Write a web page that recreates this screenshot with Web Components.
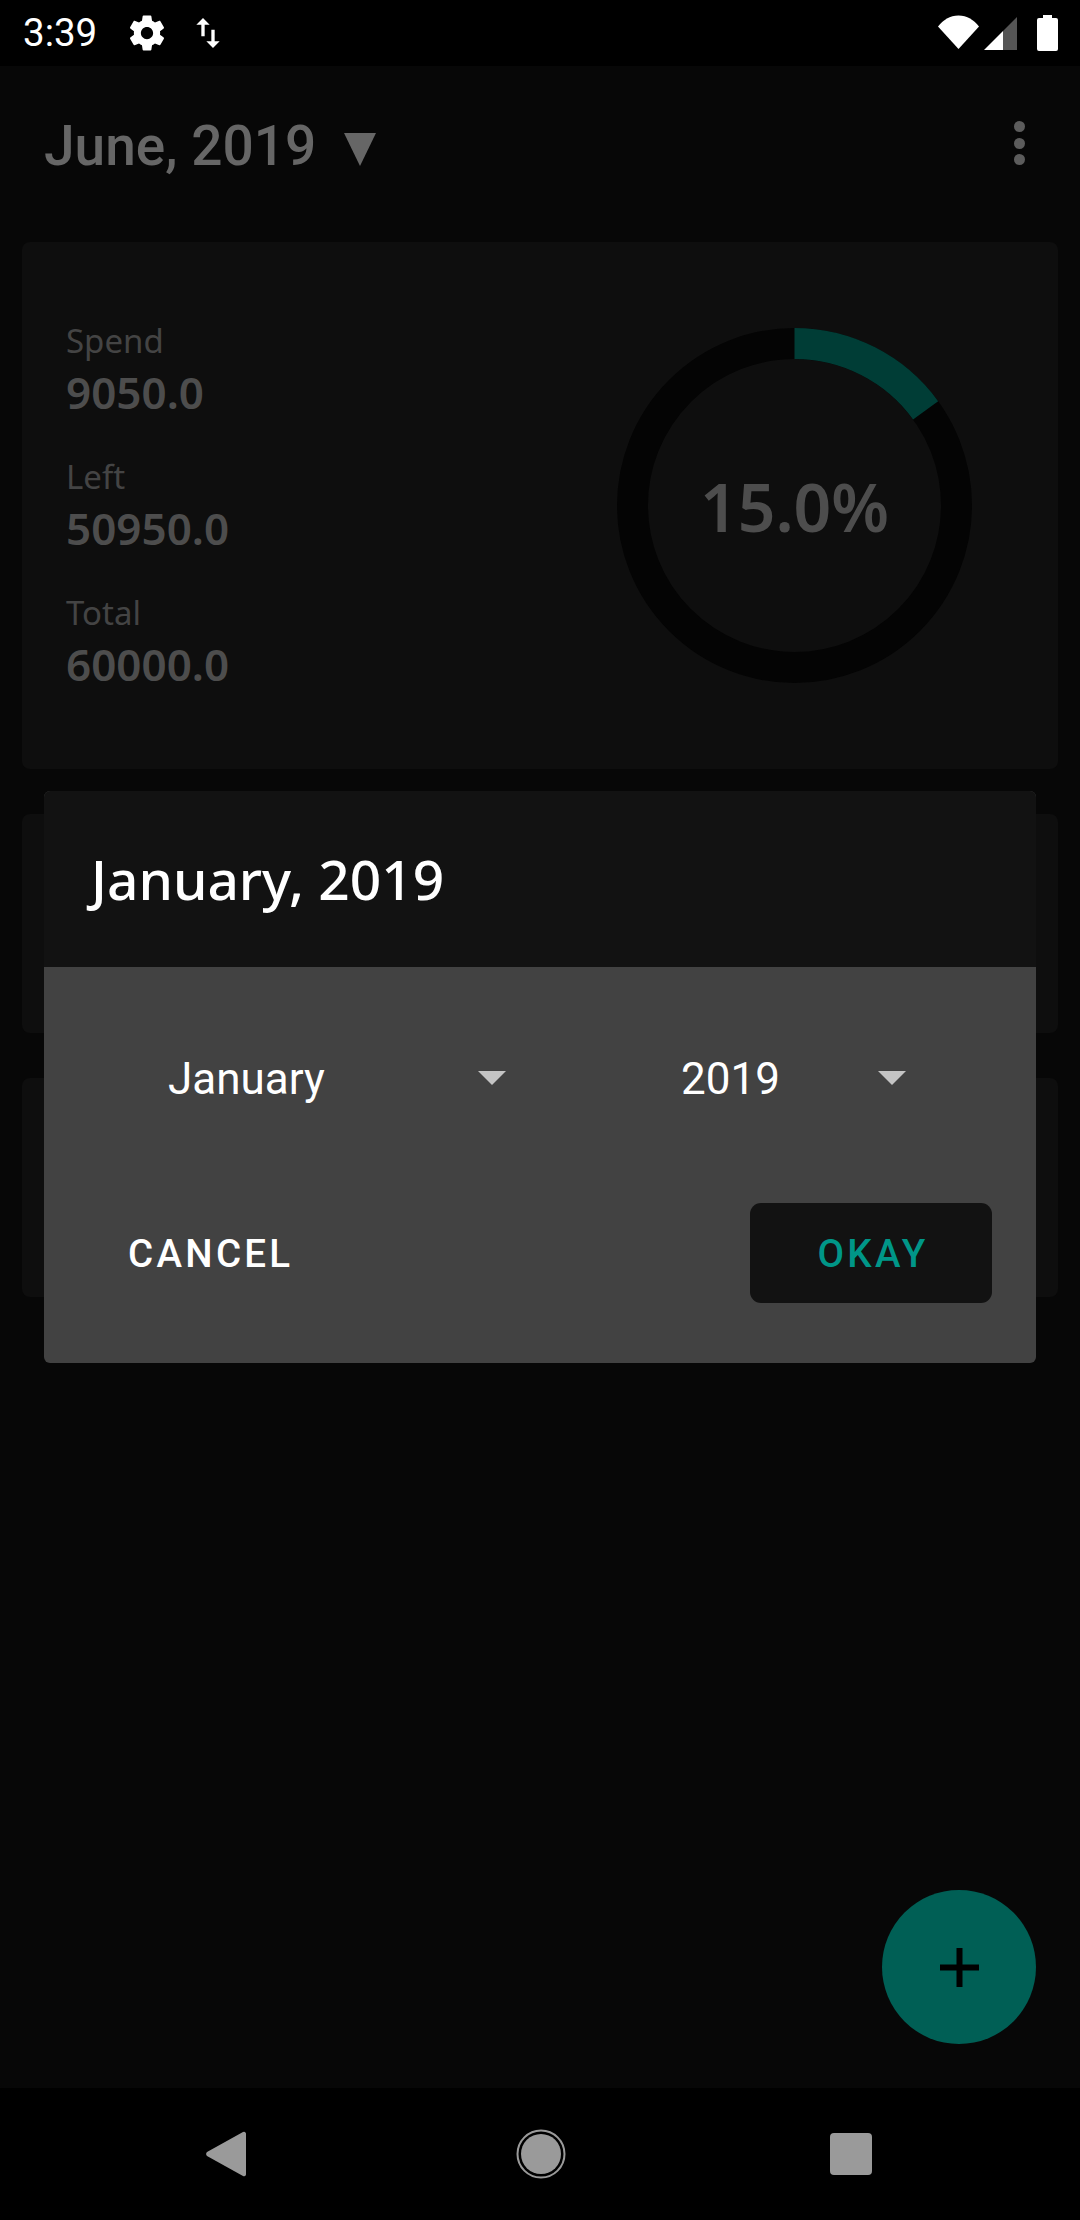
<!DOCTYPE html>
<html><head><meta charset="utf-8"><style>
html,body{margin:0;padding:0;background:#000}
</style></head><body>
<budget-app>
  <status-bar slot="status"></status-bar>
  <app-bar slot="bar" title-text="June, 2019"></app-bar>
  <budget-card slot="card">
    <stat-item label="Spend" value="9050.0"></stat-item>
    <stat-item label="Left" value="50950.0"></stat-item>
    <stat-item label="Total" value="60000.0"></stat-item>
    <donut-chart slot="chart" percent="15" text="15.0%"></donut-chart>
  </budget-card>
  <plain-card slot="card"></plain-card>
  <plain-card slot="card"></plain-card>
  <month-dialog slot="over" heading="January, 2019">
    <drop-select value="January" slot="a"></drop-select>
    <drop-select value="2019" slot="b"></drop-select>
  </month-dialog>
  <add-fab slot="over"></add-fab>
  <nav-bar slot="nav"></nav-bar>
</budget-app>
<script>
function def(name, html){
  customElements.define(name, class extends HTMLElement{
    constructor(){super();this.attachShadow({mode:'open'});}
    connectedCallback(){
      this.shadowRoot.innerHTML=typeof html==='function'?html(this):html;
    }
  });
}
def('budget-app',`<style>
:host{display:flex;flex-direction:column;width:1080px;height:2220px;background:#070707;position:relative;overflow:hidden}
main{flex:1;position:relative;display:flex;flex-direction:column;min-height:0}
.cards{display:flex;flex-direction:column;gap:45px;padding:0 22px}
</style>
<slot name="status"></slot>
<main><slot name="bar"></slot><div class="cards"><slot name="card"></slot></div><slot name="over"></slot></main>
<slot name="nav"></slot>`);

def('status-bar',`<style>
:host{display:flex;align-items:center;height:66px;background:#000;color:#fff;padding:0 22px 0 23px;box-sizing:border-box}
.t{font:400 38.500px/66px Roboto,sans-serif;width:98px}
svg{display:block;fill:#fff}
.sp{flex:1}
</style>
<span class="t">3:39</span>
<svg width="42" height="42" viewBox="0 0 24 24" style="margin-left:5px"><path d="M19.43 12.98c.04-.32.07-.64.07-.98s-.03-.66-.07-.98l2.11-1.65c.19-.15.24-.42.12-.64l-2-3.46c-.12-.22-.39-.3-.61-.22l-2.49 1c-.52-.4-1.08-.73-1.69-.98l-.38-2.65C14.46 2.18 14.25 2 14 2h-4c-.25 0-.46.18-.49.42l-.38 2.65c-.61.25-1.17.59-1.69.98l-2.49-1c-.23-.09-.49 0-.61.22l-2 3.46c-.13.22-.07.49.12.64l2.11 1.65c-.04.32-.07.65-.07.98s.03.66.07.98l-2.11 1.65c-.19.15-.24.42-.12.64l2 3.46c.12.22.39.3.61.22l2.49-1c.52.4 1.08.73 1.69.98l.38 2.65c.03.24.24.42.49.42h4c.25 0 .46-.18.49-.42l.38-2.65c.61-.25 1.17-.59 1.69-.98l2.49 1c.23.09.49 0 .61-.22l2-3.46c.12-.22.07-.49-.12-.64l-2.11-1.65zM12 15.5c-1.93 0-3.5-1.57-3.5-3.5s1.57-3.5 3.5-3.5 3.5 1.57 3.5 3.5-1.57 3.5-3.5 3.5z"/></svg>
<svg width="40" height="40" viewBox="0 0 24 24" style="margin-left:20px"><path d="M16 17.01V10h-2v7.01h-3L15 21l4-3.99h-3zM9 3L5 6.99h3V14h2V6.99h3L9 3z"/></svg>
<span class="sp"></span>
<svg width="41" height="36" viewBox="0 0 41 36"><path d="M0 11.500C5 5 12 .5 20.500 .5S36 5 41 11.500L20.500 34z"/></svg>
<svg width="33" height="33" viewBox="0 0 33 33" style="margin-left:5px"><path d="M33 0V33H19V14z" fill="#555"/><path d="M19 14V33H0z"/></svg>
<svg width="21" height="36" viewBox="0 0 21 36" style="margin-left:20px"><path d="M6 0h9v3h4a2 2 0 0 1 2 2v29a2 2 0 0 1-2 2H2a2 2 0 0 1-2-2V5a2 2 0 0 1 2-2h4z"/></svg>`);

def('app-bar',el=>`<style>
:host{display:flex;height:176px;padding:0 0 0 44px;box-sizing:border-box}
.t{font:500 55px/55px Roboto,sans-serif;color:#666;margin-top:53px;height:55px;white-space:nowrap}
.tri{display:block;margin:67px 0 0 28px;fill:#666}
.sp{flex:1}
.dots{display:flex;flex-direction:column;gap:5.500px;margin:55px 55px 0 0}
.dots i{display:block;width:11px;height:11px;border-radius:50%;background:#5c5c5c}
</style>
<span class="t">${el.getAttribute('title-text')}</span>
<svg class="tri" width="32" height="33" viewBox="0 0 32 33"><path d="M0 0H32L16 33z"/></svg>
<span class="sp"></span>
<div class="dots"><i></i><i></i><i></i></div>`);

def('budget-card',`<style>
:host{display:flex;height:527px;background:#0e0e0e;border-radius:8px;box-sizing:border-box;padding:0 86px 0 44px;align-items:center;justify-content:space-between}
.col{display:flex;flex-direction:column;margin-top:33px}
</style>
<div class="col"><slot></slot></div><slot name="chart"></slot>`);

def('stat-item',el=>`<style>
:host{display:flex;flex-direction:column;height:136px}
.l{font:400 33px/45px "Noto Sans",sans-serif;color:#444;white-space:nowrap}
.v{font:600 44px/58px "Noto Sans",sans-serif;color:#4d4d4d;white-space:nowrap}
</style>
<div class="l">${el.getAttribute('label')}</div><div class="v">${el.getAttribute('value')}</div>`);

def('donut-chart',el=>{
  const r=162,c=2*Math.PI*r,p=+el.getAttribute('percent')/100;
  return `<style>
:host{display:block;width:355px;height:355px;position:relative}
svg{display:block;transform:rotate(-90deg)}
.x{position:absolute;inset:0;display:flex;align-items:center;justify-content:center;font:600 66px/1 "Noto Sans",sans-serif;color:#4d4d4d}
</style>
<svg width="355" height="355" viewBox="0 0 355 355"><circle cx="177.5" cy="177.5" r="${r}" fill="none" stroke="#040404" stroke-width="31"/><circle cx="177.5" cy="177.5" r="${r}" fill="none" stroke="#003d36" stroke-width="31" stroke-dasharray="${c*p} ${c}"/></svg>
<div class="x">${el.getAttribute('text')}</div>`});

def('plain-card',`<style>:host{display:block;height:219px;background:#0e0e0e;border-radius:8px}</style>`);

def('month-dialog',el=>`<style>
:host{position:absolute;left:44px;top:725px;width:992px;height:572px;display:flex;flex-direction:column;border-radius:6px;overflow:hidden;background:#424242}
header{height:176px;background:#121212;color:#fff;box-sizing:border-box;padding:0 0 0 47px;font:500 55px/176px "Noto Sans",sans-serif;white-space:nowrap}
.sel{display:flex;height:236px;box-sizing:border-box}
.foot{display:flex;justify-content:space-between;align-items:flex-start;padding:0 44px 0 0}
.btn{font:500 38.500px/102px Roboto,sans-serif;letter-spacing:3.300px;height:100px;text-align:center;white-space:nowrap}
.c{color:#fff;margin-left:84px}
.o{color:#009688;background:#121212;border-radius:11px;width:242px;text-indent:4px}
</style>
<header>${el.getAttribute('heading')}</header>
<div class="sel"><slot name="a"></slot><slot name="b"></slot></div>
<div class="foot"><div class="btn c">CANCEL</div><div class="btn o">OKAY</div></div>`);

def('drop-select',el=>{
  const a=el.getAttribute('slot')==='a';
  return `<style>
:host{display:flex;align-items:center;height:224px;box-sizing:border-box;padding-left:${a?124:153}px;font:400 44px/1 Roboto,sans-serif;color:#fff;width:${a?484:508}px}
span{flex:none;white-space:nowrap}
svg{display:block;fill:#c4c4c4;margin-top:-2px}
</style><span style="width:${a?310:195}px">${el.getAttribute('value')}</span><svg width="28" height="14" viewBox="0 0 28 14" style="margin-left:${a?0:2}px"><path d="M0 0H28L14 14z"/></svg>`});

def('add-fab',`<style>
:host{position:absolute;right:44px;bottom:44px;width:154px;height:154px;border-radius:50%;background:#005f55;display:flex;align-items:center;justify-content:center}
svg{display:block;fill:#000}
</style><svg width="39" height="39" viewBox="0 0 39 39"><path d="M16.500 0h6v16.500H39v6H22.500V39h-6V22.500H0v-6h16.500z"/></svg>`);

def('nav-bar',`<style>
:host{display:flex;height:132px;background:#000;align-items:center;padding-left:206px;box-sizing:border-box}
svg{display:block;fill:#9a9a9a}
</style>
<svg width="40" height="46" viewBox="0 0 40 46"><path d="M37 1a2 2 0 0 1 3 1.500V43.500a2 2 0 0 1-3 1.500L1 25a3 3 0 0 1 0-4z"/></svg>
<svg width="50" height="50" viewBox="0 0 50 50" style="margin-left:270px"><circle cx="25" cy="25" r="20"/><circle cx="25" cy="25" r="23.500" fill="none" stroke="#9a9a9a" stroke-width="2"/></svg>
<svg width="42" height="42" viewBox="0 0 42 42" style="margin-left:264px"><rect width="42" height="42" rx="4"/></svg>`);
</script>
</body></html>
